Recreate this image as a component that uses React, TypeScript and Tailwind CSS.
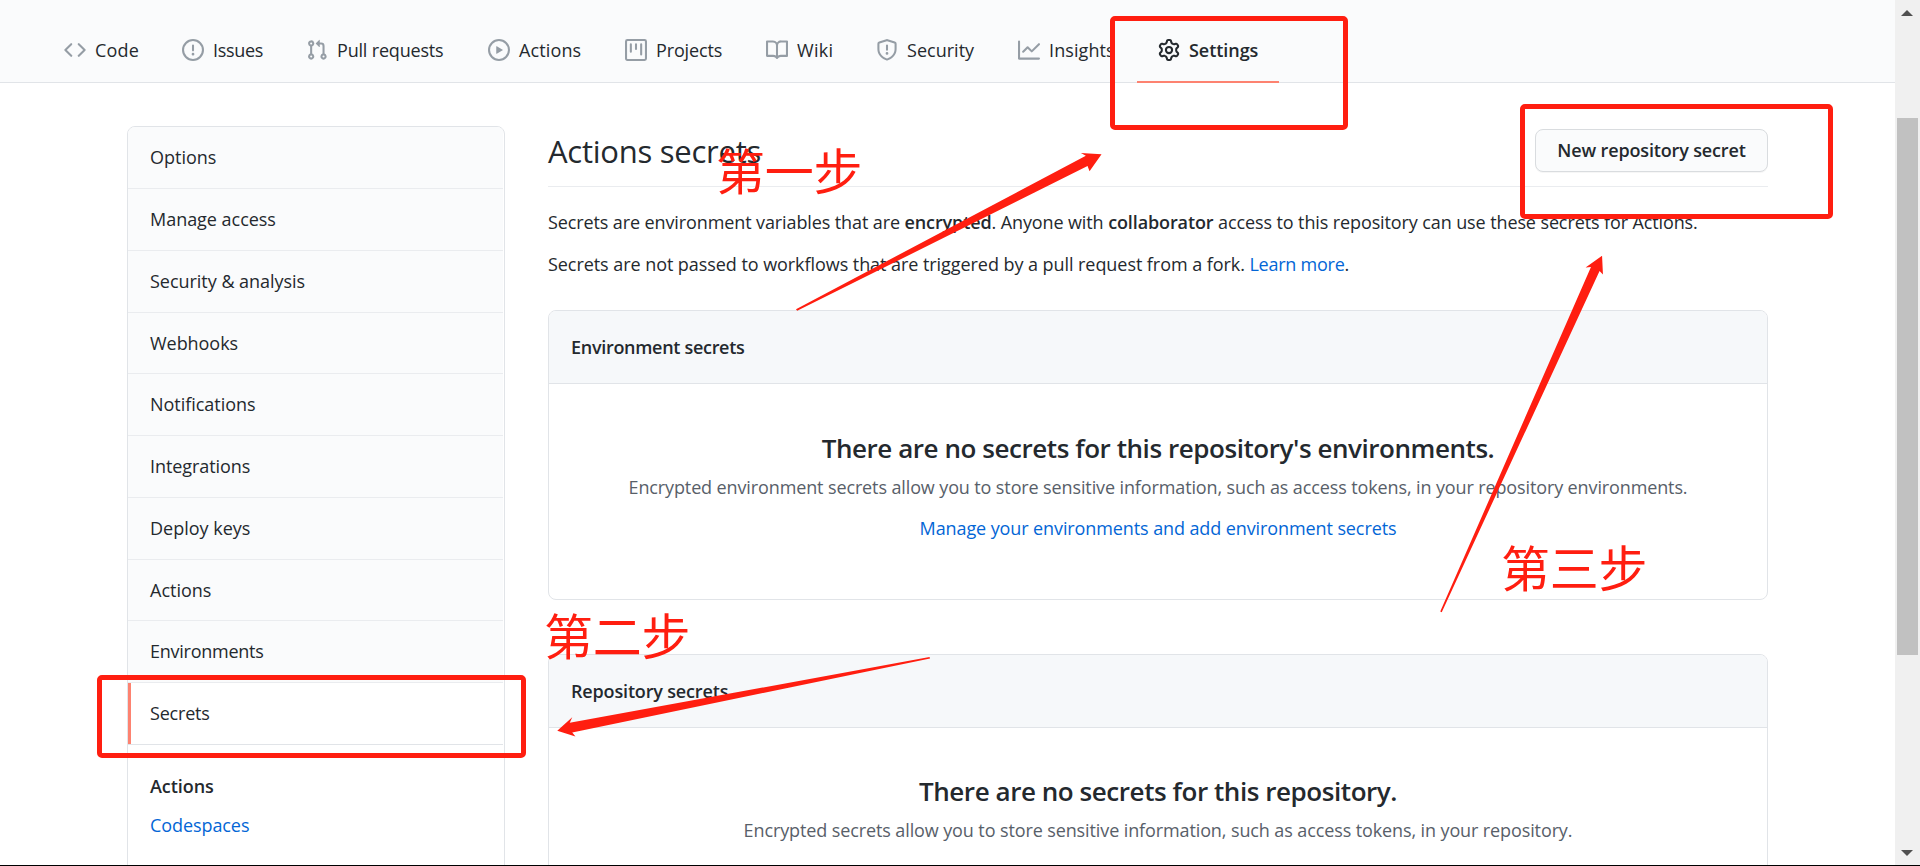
import type { ReactNode } from "react";

const icons = {
  code: "M4.72 3.22a.75.75 0 011.06 1.06L2.06 8l3.72 3.72a.75.75 0 11-1.06 1.06L.47 8.53a.75.75 0 010-1.06l4.25-4.25zm6.56 0a.75.75 0 10-1.06 1.06L13.94 8l-3.72 3.72a.75.75 0 101.06 1.06l4.25-4.25a.75.75 0 000-1.06l-4.25-4.25z",
  issue: "M8 1.5a6.5 6.5 0 100 13 6.5 6.5 0 000-13zM0 8a8 8 0 1116 0A8 8 0 010 8zm9 3a1 1 0 11-2 0 1 1 0 012 0zm-.25-6.25a.75.75 0 00-1.5 0v3.5a.75.75 0 001.5 0v-3.5z",
  pull: "M7.177 3.073L9.573.677A.25.25 0 0110 .854v4.792a.25.25 0 01-.427.177L7.177 3.427a.25.25 0 010-.354zM3.75 2.5a.75.75 0 100 1.5.75.75 0 000-1.5zm-2.25.75a2.25 2.25 0 113 2.122v5.256a2.251 2.251 0 11-1.5 0V5.372A2.25 2.25 0 011.5 3.25zM11 2.5h-1V4h1a1 1 0 011 1v5.628a2.251 2.251 0 101.5 0V5A2.5 2.5 0 0011 2.5zm1 10.25a.75.75 0 111.5 0 .75.75 0 01-1.5 0zM3.75 12a.75.75 0 100 1.5.75.75 0 000-1.5z",
  play: "M1.5 8a6.5 6.5 0 1113 0 6.5 6.5 0 01-13 0zM8 0a8 8 0 100 16A8 8 0 008 0zM6.379 5.227A.25.25 0 006 5.442v5.117a.25.25 0 00.379.214l4.264-2.559a.25.25 0 000-.428L6.379 5.227z",
  project: "M1.75 0A1.75 1.75 0 000 1.75v12.5C0 15.216.784 16 1.75 16h12.5A1.75 1.75 0 0016 14.25V1.75A1.75 1.75 0 0014.25 0H1.75zM1.5 1.75a.25.25 0 01.25-.25h12.5a.25.25 0 01.25.25v12.5a.25.25 0 01-.25.25H1.75a.25.25 0 01-.25-.25V1.75zM11.75 3a.75.75 0 00-.75.75v7.5a.75.75 0 001.5 0v-7.5a.75.75 0 00-.75-.75zm-8.25.75a.75.75 0 011.5 0v5.5a.75.75 0 01-1.5 0v-5.5zM8 3a.75.75 0 00-.75.75v3.5a.75.75 0 001.5 0v-3.5A.75.75 0 008 3z",
  book: "M0 1.75A.75.75 0 01.75 1h4.253c1.227 0 2.317.59 3 1.501A3.744 3.744 0 0111.006 1h4.245a.75.75 0 01.75.75v10.5a.75.75 0 01-.75.75h-4.507a2.25 2.25 0 00-1.591.659l-.622.621a.75.75 0 01-1.06 0l-.622-.621A2.25 2.25 0 005.258 13H.75a.75.75 0 01-.75-.75V1.75zm8.755 3a2.25 2.25 0 012.25-2.25H14.5v9h-3.757c-.71 0-1.4.201-1.992.572l.004-7.322zm-1.504 7.324l.004-5.073-.002-2.253A2.25 2.25 0 005.003 2.5H1.5v9h3.757a3.75 3.75 0 011.994.574z",
  shield: "M7.467.133a1.75 1.75 0 011.066 0l5.25 1.68A1.75 1.75 0 0115 3.48V7c0 1.566-.32 3.182-1.303 4.682-.983 1.498-2.585 2.813-5.032 3.855a1.7 1.7 0 01-1.33 0c-2.447-1.042-4.049-2.357-5.032-3.855C1.32 10.182 1 8.566 1 7V3.48a1.75 1.75 0 011.217-1.667l5.25-1.68zm.61 1.429a.25.25 0 00-.153 0l-5.25 1.68a.25.25 0 00-.174.238V7c0 1.358.275 2.666 1.057 3.86.784 1.194 2.121 2.34 4.366 3.297a.2.2 0 00.154 0c2.245-.956 3.582-2.104 4.366-3.298C13.225 9.666 13.5 8.36 13.5 7V3.48a.25.25 0 00-.174-.237l-5.25-1.68zM9 10.5a1 1 0 11-2 0 1 1 0 012 0zm-.25-5.75a.75.75 0 10-1.5 0v3a.75.75 0 001.5 0v-3z",
  graph: "M1.5 1.75a.75.75 0 00-1.5 0v12.5c0 .414.336.75.75.75h14.5a.75.75 0 000-1.5H1.5V1.75zm14.28 2.53a.75.75 0 00-1.06-1.06L10 7.94 7.53 5.47a.75.75 0 00-1.06 0L3.22 8.72a.75.75 0 001.06 1.06L7 7.06l2.47 2.47a.75.75 0 001.06 0l5.25-5.25z",
  gear: "M7.429 1.525a6.593 6.593 0 011.142 0c.036.003.108.036.137.146l.289 1.105c.147.56.55.967.997 1.189.174.086.341.183.501.29.417.278.97.423 1.53.27l1.102-.303c.11-.03.175.016.195.046.219.31.41.641.573.989.014.031.022.11-.059.19l-.815.806c-.411.406-.562.957-.53 1.456a4.588 4.588 0 010 .582c-.032.499.119 1.05.53 1.456l.815.806c.08.08.073.159.059.19a6.494 6.494 0 01-.573.99c-.02.029-.086.074-.195.045l-1.103-.303c-.559-.153-1.112-.008-1.529.27-.16.107-.327.204-.5.29-.449.222-.851.628-.998 1.189l-.289 1.105c-.029.11-.101.143-.137.146a6.613 6.613 0 01-1.142 0c-.036-.003-.108-.037-.137-.146l-.289-1.105c-.147-.56-.55-.967-.997-1.189a4.502 4.502 0 01-.501-.29c-.417-.278-.97-.423-1.53-.27l-1.102.303c-.11.03-.175-.016-.195-.046a6.492 6.492 0 01-.573-.989c-.014-.031-.022-.11.059-.19l.815-.806c.411-.406.562-.957.53-1.456a4.587 4.587 0 010-.582c.032-.499-.119-1.05-.53-1.456l-.815-.806c-.08-.08-.073-.159-.059-.19a6.44 6.44 0 01.573-.99c.02-.029.086-.075.195-.045l1.103.303c.559.153 1.112.008 1.529-.27.16-.107.327-.204.5-.29.449-.222.851-.628.998-1.189l.289-1.105c.029-.11.101-.143.137-.146zM8 0c-.236 0-.47.01-.701.03-.743.065-1.29.615-1.458 1.261l-.29 1.106c-.017.066-.078.158-.211.224a5.994 5.994 0 00-.668.386c-.123.082-.233.09-.3.071L3.27 2.776c-.644-.177-1.392.02-1.82.63a7.977 7.977 0 00-.704 1.217c-.315.675-.111 1.422.363 1.891l.815.806c.05.048.098.147.088.294a6.084 6.084 0 000 .772c.01.147-.038.246-.088.294l-.815.806c-.474.469-.678 1.216-.363 1.891.2.428.436.835.704 1.218.428.609 1.176.806 1.82.63l1.103-.303c.066-.019.176-.011.299.071.213.143.436.272.668.386.133.066.194.158.212.224l.289 1.106c.169.646.715 1.196 1.458 1.26a8.094 8.094 0 001.402 0c.743-.064 1.29-.614 1.458-1.26l.29-1.106c.017-.066.078-.158.211-.224a5.98 5.98 0 00.668-.386c.123-.082.233-.09.3-.071l1.102.302c.644.177 1.392-.02 1.82-.63.268-.382.505-.789.704-1.217.315-.675.111-1.422-.364-1.891l-.814-.806c-.05-.048-.098-.147-.088-.294a6.1 6.1 0 000-.772c-.01-.147.039-.246.088-.294l.814-.806c.475-.469.679-1.216.364-1.891a7.992 7.992 0 00-.704-1.218c-.428-.609-1.176-.806-1.82-.63l-1.103.303c-.066.019-.176.011-.299-.071a5.991 5.991 0 00-.668-.386c-.133-.066-.194-.158-.212-.224L10.16 1.29C9.99.645 9.444.095 8.701.031A8.094 8.094 0 008 0zm1.5 8a1.5 1.5 0 11-3 0 1.5 1.5 0 013 0zM11 8a3 3 0 11-6 0 3 3 0 016 0z",
};

const tabs: { label: string; icon: keyof typeof icons; size: string }[] = [
  { label: "Code", icon: "code", size: "w-[118px] tracking-[0.2px]" },
  { label: "Issues", icon: "issue", size: "w-[124px] tracking-[-0.3px]" },
  { label: "Pull requests", icon: "pull", size: "w-[182px] tracking-[-0.18px]" },
  { label: "Actions", icon: "play", size: "w-[137px] tracking-[0.12px]" },
  { label: "Projects", icon: "project", size: "w-[141px] tracking-[-0.15px]" },
  { label: "Wiki", icon: "book", size: "w-[110px] tracking-[0.3px]" },
  { label: "Security", icon: "shield", size: "w-[142px] tracking-[0.02px]" },
  { label: "Insights", icon: "graph", size: "w-[141px] tracking-[0.1px]" },
  { label: "Settings", icon: "gear", size: "w-[142px] tracking-[-0.05px]" },
];

const menu: { label: string; tracking: string }[] = [
  { label: "Options", tracking: "tracking-[0px]" },
  { label: "Manage access", tracking: "tracking-[-0.03px]" },
  { label: "Security & analysis", tracking: "tracking-[-0.03px]" },
  { label: "Webhooks", tracking: "tracking-[-0.05px]" },
  { label: "Notifications", tracking: "tracking-[-0.03px]" },
  { label: "Integrations", tracking: "tracking-[-0.07px]" },
  { label: "Deploy keys", tracking: "tracking-[0px]" },
  { label: "Actions", tracking: "tracking-[0px]" },
  { label: "Environments", tracking: "tracking-[-0.25px]" },
  { label: "Secrets", tracking: "tracking-[-0.2px]" },
];

function Tab({ label, icon, size }: (typeof tabs)[number]) {
  const active = label === "Settings";
  return (
    <a
      className={`flex h-[66px] shrink-0 items-center gap-[9px] border-b-2 pt-[2px] ${size} ${
        active ? "border-[#fd8270] pl-[21px] font-semibold" : "border-transparent pl-[22px]"
      }`}
    >
      <svg
        viewBox="0 0 16 16"
        className={`size-[22px] shrink-0 ${active ? "fill-[#24292e]" : "fill-[#959da5]"}`}
      >
        <path fillRule="evenodd" d={icons[icon]} />
      </svg>
      {label}
    </a>
  );
}

function Sidebar() {
  return (
    <aside className="h-[800px] w-[378px] shrink-0 overflow-hidden rounded-t-[8px] border border-[#e1e4e8] pt-[0.4px]">
      {menu.map(({ label, tracking }) => {
        const selected = label === "Secrets";
        return (
          <a
            key={label}
            className={`mr-px flex h-[61.75px] items-center border-b ${tracking} ${
              selected ? "border-[#e1e4e8] bg-white" : "border-[#eaecef] bg-[#fafbfc]"
            }`}
          >
            <span className={`h-full w-[3px] ${selected ? "bg-[#fd8270]" : ""}`} />
            <span className="pl-[19px]">{label}</span>
          </a>
        );
      })}
      <div className="pl-[22px] pt-[27px] leading-7">
        <h4 className="font-semibold tracking-[-0.05px]">Actions</h4>
        <a className="mt-[11px] block tracking-[-0.08px] text-[#0366d6]">Codespaces</a>
      </div>
    </aside>
  );
}

function SecretBox({ title, className, children }: { title: string; className: string; children: ReactNode }) {
  return (
    <section className={`rounded-[8px] border border-[#e1e4e8] text-center ${className}`}>
      <h3 className="flex h-[73px] items-center rounded-t-[7px] border-b border-[#e1e4e8] bg-[#f6f8fa] pl-[22px] font-semibold">
        {title}
      </h3>
      {children}
    </section>
  );
}

function Annotations() {
  return (
    <div className="pointer-events-none absolute inset-0 font-['Noto_Sans_CJK_SC',sans-serif] text-[49px] leading-[48px] font-normal tracking-[-0.2px] text-[#ff1e10]">
      <div className="absolute left-[1110px] top-[16px] h-[114px] w-[238px] rounded-[5px] border-5 border-[#ff1e10]" />
      <div className="absolute left-[1520px] top-[104px] h-[115px] w-[313px] rounded-[5px] border-5 border-[#ff1e10]" />
      <div className="absolute left-[97px] top-[675px] h-[83px] w-[429px] rounded-[5px] border-5 border-[#ff1e10]" />
      <svg viewBox="0 0 1920 866" className="absolute inset-0 h-full w-full fill-[#ff1e10]">
        <path d="M1101.7 154.5L1081 153.2L1086 156L795.8 309.5L797 311.2L1087.7 166.3L1089.7 171.5Z" />
        <path d="M556.8 731.5L571.8 718L569.3 723.7L929.5 657.8L930 659.2L571.8 733.3L575 737.3Z" />
        <path d="M1602.8 256L1586.3 267.7L1591.7 267.3L1440.8 612.3L1442.3 613L1600.3 271.3L1603.7 274.7Z" />
      </svg>
      <span className="absolute left-[716px] top-[145px] whitespace-nowrap">第一步</span>
      <span className="absolute left-[544px] top-[610px] whitespace-nowrap">第二步</span>
      <span className="absolute left-[1501px] top-[542px] whitespace-nowrap">第三步</span>
    </div>
  );
}

export default function App() {
  return (
    <div className="relative flex h-[866px] w-[1920px] flex-col overflow-hidden border-b border-black bg-white font-['Open_Sans',sans-serif] text-[18px] text-[#24292e]">
      <div className="flex min-h-0 flex-1">
        <div className="flex min-w-0 flex-1 flex-col overflow-hidden">
          <header className="flex h-[83px] shrink-0 items-end border-b border-[#e1e4e8] bg-[#fafbfc] pl-[42px]">
            <nav className="-mb-px flex">
              {tabs.map((tab) => (
                <Tab key={tab.label} {...tab} />
              ))}
            </nav>
          </header>
          <div className="flex min-h-0 flex-1 items-start gap-[43px] pl-[127px] pt-[43px]">
            <Sidebar />
            <main className="w-[1220px] shrink-0">
              <div className="flex h-[61px] items-center justify-between border-b border-[#eaecef] pb-[11px]">
                <h2 className="pt-[2px] text-[31px] tracking-[-0.25px]">Actions secrets</h2>
                <button className="h-[43px] w-[233px] rounded-[8px] border border-[#d9dcdf] bg-[#fafbfc] font-semibold tracking-[-0.15px] shadow-[0_1px_0_rgba(27,31,35,0.04)]">
                  New repository secret
                </button>
              </div>
              <p className="mt-[21px] whitespace-nowrap leading-7 tracking-[-0.11px]">
                Secrets are environment variables that are <strong className="font-semibold">encrypted</strong>. Anyone with{" "}
                <strong className="font-semibold">collaborator</strong> access to this repository can use these secrets for Actions.
              </p>
              <p className="mt-[14px] whitespace-nowrap leading-7 tracking-[-0.06px]">
                Secrets are not passed to workflows that are triggered by a pull request from a fork.{" "}
                <a className="tracking-[-0.25px] text-[#0366d6]">Learn more</a>.
              </p>
              <SecretBox title="Environment secrets" className="mt-8 h-[290px] tracking-[-0.3px]">
                <h4 className="mt-[46px] text-[26px] font-semibold leading-9 tracking-[-0.44px]">
                  There are no secrets for this repository's environments.
                </h4>
                <p className="mt-[7px] whitespace-nowrap leading-7 tracking-[-0.12px] text-[#586069]">
                  Encrypted environment secrets allow you to store sensitive information, such as access tokens, in your repository environments.
                </p>
                <a className="mt-[13px] block leading-7 tracking-[-0.1px] text-[#0366d6]">
                  Manage your environments and add environment secrets
                </a>
              </SecretBox>
              <SecretBox title="Repository secrets" className="mt-[54px] h-[290px] tracking-[-0.16px]">
                <h4 className="mt-[45px] text-[26px] font-semibold leading-9 tracking-[-0.44px]">
                  There are no secrets for this repository.
                </h4>
                <p className="mt-[7px] whitespace-nowrap leading-7 tracking-[-0.11px] text-[#586069]">
                  Encrypted secrets allow you to store sensitive information, such as access tokens, in your repository.
                </p>
              </SecretBox>
            </main>
          </div>
        </div>
        <div className="flex w-[25px] shrink-0 flex-col items-center bg-[#f0f0f0] pr-px">
          <svg viewBox="0 0 12 6" className="mt-[10px] h-[6px] w-[12px] shrink-0 fill-[#505050]">
            <path d="M6 0L12 6H0Z" />
          </svg>
          <div className="mt-[102px] h-[537px] w-[21px] shrink-0 bg-[#c1c1c1]" />
          <svg viewBox="0 0 12 6" className="mt-[195px] h-[6px] w-[12px] shrink-0 fill-[#505050]">
            <path d="M0 0H12L6 6Z" />
          </svg>
        </div>
      </div>
      <Annotations />
    </div>
  );
}
